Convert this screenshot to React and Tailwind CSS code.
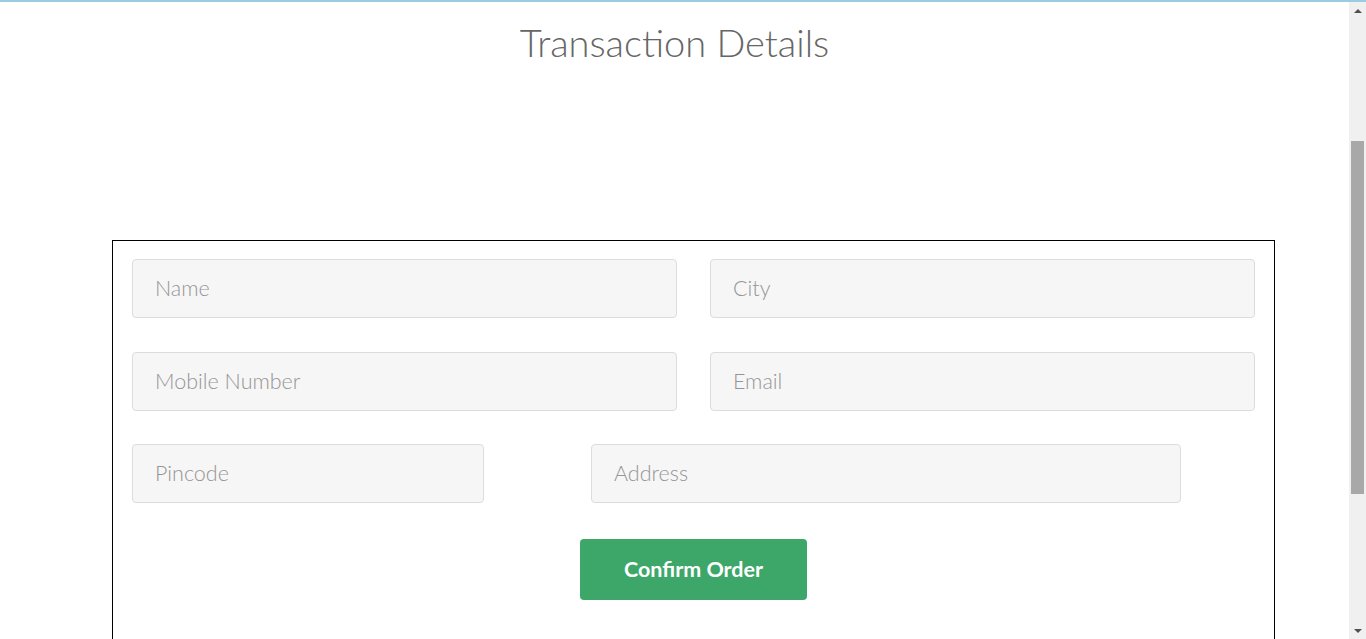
import React from "react";

const inputCls =
  "h-[59px] rounded-[4px] border border-[#dcdcdc] bg-[#f6f6f6] pl-[22px] pr-3 text-[21.5px] font-light text-[#555] placeholder:text-[#959595] outline-none";

export default function App() {
  return (
    <div
      className="h-[639px] overflow-hidden border-t-2 border-[#9ccae0] bg-white flex"
      style={{ fontFamily: "Lato, 'Open Sans', sans-serif" }}
    >
      <main className="flex-1 min-w-0">
        <h1 className="pt-[18px] text-center text-[38px] font-light leading-[1.2] text-[#666]">
          Transaction Details
        </h1>

        <div className="ml-[112px] mt-[174px] w-[1163px] h-[420px] border border-black px-[19px] pt-[18px]">
          <div className="flex gap-[33px]">
            <input className={`${inputCls} w-[545px]`} placeholder="Name" />
            <input className={`${inputCls} w-[545px]`} placeholder="City" />
          </div>
          <div className="mt-[34px] flex gap-[33px]">
            <input className={`${inputCls} w-[545px]`} placeholder="Mobile Number" />
            <input className={`${inputCls} w-[545px]`} placeholder="Email" />
          </div>
          <div className="mt-[33px] flex gap-[107px]">
            <input className={`${inputCls} w-[352px]`} placeholder="Pincode" />
            <input className={`${inputCls} w-[590px]`} placeholder="Address" />
          </div>
          <button className="mx-auto mt-[36px] block h-[61px] w-[227px] rounded-[4px] bg-[#3ca769] text-[21.5px] font-bold text-white">
            Confirm Order
          </button>
        </div>
      </main>

      {/* fake browser scrollbar */}
      <div className="w-[17px] shrink-0 bg-[#f0f0f0] flex flex-col items-center">
        <div className="h-[17px] flex items-center justify-center">
          <div className="w-0 h-0 border-l-[4px] border-r-[4px] border-b-[4px] border-l-transparent border-r-transparent border-b-[#505050]" />
        </div>
        <div className="mt-[122px] h-[353px] w-[13px] bg-[#a8a8a8]" />
        <div className="flex-1" />
        <div className="h-[17px] flex items-center justify-center">
          <div className="w-0 h-0 border-l-[4px] border-r-[4px] border-t-[4px] border-l-transparent border-r-transparent border-t-[#505050]" />
        </div>
      </div>
    </div>
  );
}
